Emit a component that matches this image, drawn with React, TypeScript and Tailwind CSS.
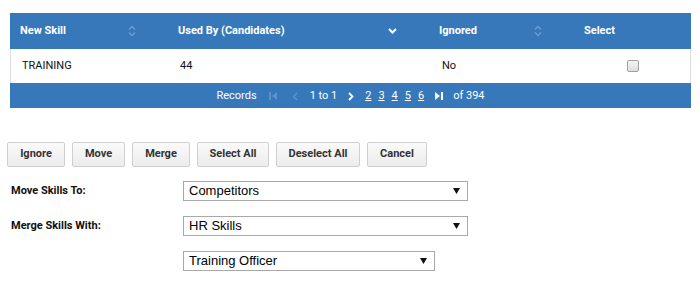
import React from "react";

const SortIcon = () => (
  <svg width="8" height="12" viewBox="0 0 8 12" fill="none" stroke="#6c9dd2" strokeWidth="1.4">
    <path d="M1 4.5 L4 1.5 L7 4.5" />
    <path d="M1 7.5 L4 10.5 L7 7.5" />
  </svg>
);

const ChevronDown = () => (
  <svg width="9" height="6" viewBox="0 0 9 6" fill="none" stroke="#ffffff" strokeWidth="2">
    <path d="M1 1 L4.5 4.5 L8 1" />
  </svg>
);

const Caret = () => (
  <svg width="7" height="6" viewBox="0 0 7 6">
    <path d="M0 0 H7 L3.5 6 Z" fill="#111" />
  </svg>
);

const Select = ({ value, w }: { value: string; w: string }) => (
  <div
    className={`${w} h-[20px] border border-[#a9a9a9] bg-white flex items-center justify-between pl-[5px] pr-[7px] text-[13px] text-black`}
    style={{ fontFamily: '"Liberation Sans", Arial, sans-serif' }}
  >
    <span>{value}</span>
    <Caret />
  </div>
);

const Btn = ({ label, w }: { label: string; w: string }) => (
  <div
    className={`${w} h-[25px] flex items-center justify-center border border-[#cfcfcf] rounded-[2px] bg-gradient-to-b from-[#fafafa] to-[#ececec] text-[11px] font-bold text-[#333]`}
  >
    {label}
  </div>
);

export default function App() {
  return (
    <div
      className="w-[700px] h-[287px] bg-white overflow-hidden"
      style={{ fontFamily: "Roboto, 'Noto Sans', sans-serif" }}
    >
      <div className="pt-[13px] pl-[10px]">
        <div className="w-[681px]">
          {/* header */}
          <div className="h-[36px] bg-[#3778ba] flex text-white text-[11px] font-bold">
            <div className="w-[158px] flex items-center justify-between pl-[10px] pr-[32px]">
              <span>New Skill</span>
              <SortIcon />
            </div>
            <div className="w-[261px] flex items-center justify-between pl-[10px] pr-[32px]">
              <span>Used By (Candidates)</span>
              <ChevronDown />
            </div>
            <div className="w-[145px] flex items-center justify-between pl-[10px] pr-[32px]">
              <span>Ignored</span>
              <SortIcon />
            </div>
            <div className="w-[117px] flex items-center pl-[10px]">
              <span>Select</span>
            </div>
          </div>
          {/* row */}
          <div className="h-[34px] flex items-center border-l border-r border-[#dedede] text-[11px] text-[#111]">
            <div className="w-[157px] pl-[11px]">TRAINING</div>
            <div className="w-[261px] pl-[12px]">44</div>
            <div className="w-[145px] pl-[13px]">No</div>
            <div className="w-[116px] flex pl-[53px]">
              <div className="w-[12px] h-[12px] rounded-[2px] border border-[#a0a0a0] bg-gradient-to-b from-[#f4f4f4] to-[#dedede]" />
            </div>
          </div>
          {/* footer */}
          <div className="h-[25px] bg-[#3778ba] flex items-center justify-center pt-[1px] text-[11px] text-white">
            <span>Records</span>
            <svg className="ml-[12px]" width="8" height="8" viewBox="0 0 8 8">
              <rect x="0" y="0" width="2" height="8" fill="#5f93cb" />
              <path d="M8 0 V8 L3 4 Z" fill="#5f93cb" />
            </svg>
            <svg className="ml-[15px]" width="6" height="9" viewBox="0 0 6 9" fill="none" stroke="#5f93cb" strokeWidth="1.5">
              <path d="M5 1 L1.5 4.5 L5 8" />
            </svg>
            <span className="ml-[12px]">1 to 1</span>
            <svg className="ml-[11px]" width="6" height="9" viewBox="0 0 6 9" fill="none" stroke="#ffffff" strokeWidth="1.8">
              <path d="M1 1 L4.5 4.5 L1 8" />
            </svg>
            <span className="ml-[11px] underline">2</span>
            <span className="ml-[7px] underline">3</span>
            <span className="ml-[7px] underline">4</span>
            <span className="ml-[7px] underline">5</span>
            <span className="ml-[7px] underline">6</span>
            <svg className="ml-[11px]" width="8" height="8" viewBox="0 0 8 8">
              <path d="M0 0 V8 L5 4 Z" fill="#ffffff" />
              <rect x="6" y="0" width="2" height="8" fill="#ffffff" />
            </svg>
            <span className="ml-[10px]">of 394</span>
          </div>
        </div>
      </div>

      {/* buttons */}
      <div className="mt-[34px] pl-[7px] flex gap-[7px]">
        <Btn label="Ignore" w="w-[58px]" />
        <Btn label="Move" w="w-[53px]" />
        <Btn label="Merge" w="w-[58px]" />
        <Btn label="Select All" w="w-[72px]" />
        <Btn label="Deselect All" w="w-[84px]" />
        <Btn label="Cancel" w="w-[60px]" />
      </div>

      {/* form */}
      <div className="mt-[14px] flex flex-col gap-[15px]">
        <div className="flex items-center">
          <div className="w-[183px] pl-[11px] text-[11px] font-bold text-[#111]">Move Skills To:</div>
          <Select value="Competitors" w="w-[285px]" />
        </div>
        <div className="flex items-center">
          <div className="w-[183px] pl-[11px] text-[11px] font-bold text-[#111]">Merge Skills With:</div>
          <Select value="HR Skills" w="w-[285px]" />
        </div>
        <div className="flex items-center">
          <div className="w-[183px]" />
          <Select value="Training Officer" w="w-[252px]" />
        </div>
      </div>
    </div>
  );
}
